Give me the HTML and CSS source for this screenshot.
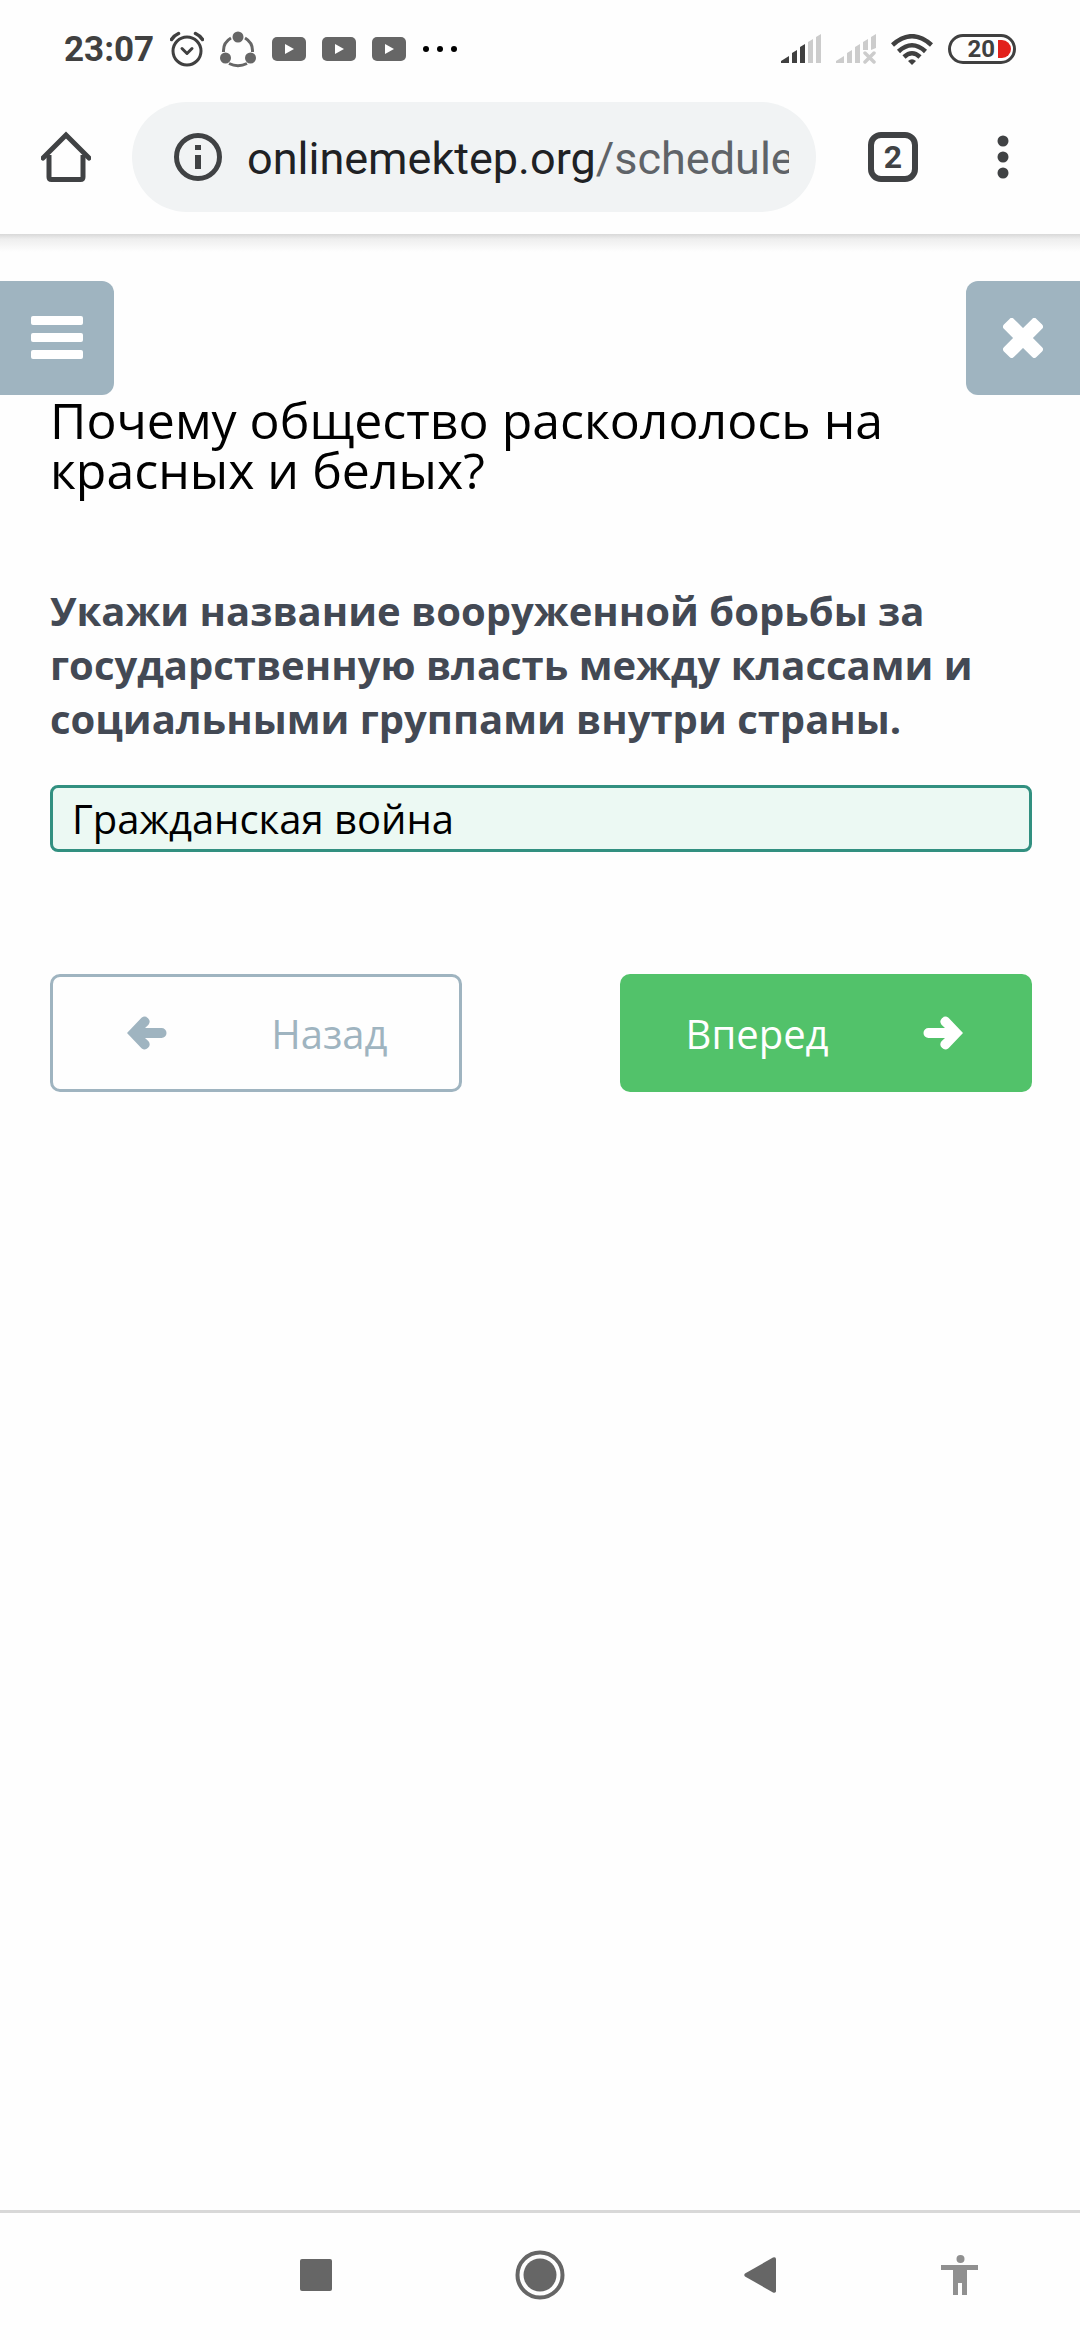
FILE: index.html
```html
<!DOCTYPE html>
<html lang="ru">
<head>
    <meta charset="UTF-8">
    <meta name="viewport" content="width=device-width, initial-scale=1.0">
    <title>Onlinemektep</title>
    <link rel="stylesheet" href="styles.css">
</head>
<body>
    <header class="status-bar">
        <div class="status-left">
            <span class="clock">23:07</span>
            <svg width="34" height="36" viewBox="0 0 34 36" fill="none" stroke="#404040" stroke-width="3" stroke-linecap="round">
                <circle cx="17" cy="20" r="14"/>
                <path d="M12 17.500l5 5 5-5" stroke-linejoin="round"/>
                <path d="M1.500 8.500Q4 4.500 8.500 2.500M32.500 8.500Q30 4.500 25.500 2.500" stroke-width="3.500"/>
            </svg>
            <svg width="36" height="38" viewBox="0 0 36 38" fill="none" stroke="#666" stroke-width="3">
                <path d="M3.500 22A15 15 0 0 1 11 8M25 8A15 15 0 0 1 32.500 22M27 33.500Q18 38 9 33.500"/>
                <g fill="#666" stroke="none">
                    <circle cx="18" cy="7" r="5.500"/>
                    <circle cx="5.500" cy="28" r="5.500"/>
                    <circle cx="30.500" cy="28" r="5.500"/>
                </g>
            </svg>
            <svg width="34" height="24" viewBox="0 0 34 24"><rect width="34" height="24" rx="5" fill="#666"/><path d="M13 7l9 5-9 5z" fill="#fff"/></svg>
            <svg width="34" height="24" viewBox="0 0 34 24"><rect width="34" height="24" rx="5" fill="#666"/><path d="M13 7l9 5-9 5z" fill="#fff"/></svg>
            <svg width="34" height="24" viewBox="0 0 34 24"><rect width="34" height="24" rx="5" fill="#666"/><path d="M13 7l9 5-9 5z" fill="#fff"/></svg>
            <svg width="36" height="8" viewBox="0 0 36 8"><circle cx="4" cy="4" r="3"/><circle cx="18" cy="4" r="3"/><circle cx="32" cy="4" r="3"/></svg>
        </div>
        <div class="status-right">
            <svg width="40" height="30" viewBox="0 0 40 30">
                <path d="M0 27l8-5v7H0zM11 19l5-3v13h-5zM19 13l5-3v19h-5z" fill="#404040"/>
                <path d="M27 8l5-3v24h-5zM35 3l5-3v29h-5z" fill="#ccc"/>
            </svg>
            <svg width="40" height="30" viewBox="0 0 40 30" fill="#ccc">
                <path d="M0 27l8-5v7H0zM11 19l5-3v13h-5zM19 13l5-3v19h-5zM27 8l5-3v11h-5zM35 3l5-3v14l-5 2z"/>
                <path d="M29 19l9 9M38 19l-9 9" stroke="#ccc" stroke-width="3.500" stroke-linecap="round"/>
            </svg>
            <svg width="42" height="31" viewBox="0 0 42 31" fill="none" stroke="#404040" stroke-width="4.500">
                <path d="M1.500 11Q21-6.500 40.500 11M7.500 17.500Q21 5 34.500 17.500M13 23Q21 15.500 29 23"/>
                <path d="M21 31l-4-4q4-3.500 8 0z" fill="#404040" stroke="none"/>
            </svg>
            <span class="battery">20<svg width="13" height="18" viewBox="0 0 13 18"><path d="M0 0h4a9 9 0 0 1 0 18H0z" fill="#e2211c"/></svg></span>
        </div>
    </header>

    <nav class="toolbar">
        <button class="icon-btn" aria-label="Home">
            <svg width="50" height="52" viewBox="0 0 50 52" fill="none" stroke="#404244" stroke-width="5">
                <path d="M2 27L25 4l23 23" stroke-linecap="round"/>
                <path d="M8 24v22q0 2.500 2.500 2.500h29q2.500 0 2.500-2.500V24"/>
            </svg>
        </button>
        <div class="address">
            <button class="icon-btn" aria-label="Site info">
                <svg width="50" height="50" viewBox="0 0 50 50">
                    <circle cx="25" cy="25" r="21.500" fill="none" stroke="#404244" stroke-width="5"/>
                    <path d="M22 13h6v5h-6zM22 23h6v14h-6z" fill="#404244"/>
                </svg>
            </button>
            <a class="url" href="#">onlinemektep.org<span class="path">/schedule</span></a>
        </div>
        <button class="tabs" aria-label="Tabs">2</button>
        <button class="icon-btn" aria-label="Menu">
            <svg width="50" height="50" viewBox="0 0 50 50" fill="#404244"><circle cx="25" cy="9" r="5.500"/><circle cx="25" cy="25" r="5.500"/><circle cx="25" cy="41" r="5.500"/></svg>
        </button>
    </nav>

    <main class="page">
        <div class="corner-buttons">
            <button class="corner corner-left" aria-label="Меню">
                <svg width="52" height="44" viewBox="0 0 52 44" fill="#fff"><rect width="52" height="9" rx="2"/><rect y="17" width="52" height="9" rx="2"/><rect y="34" width="52" height="9" rx="2"/></svg>
            </button>
            <button class="corner corner-right" aria-label="Закрыть">
                <svg width="40" height="40" viewBox="0 0 40 40" fill="#fff">
                    <rect x="-3" y="13" width="46" height="14" rx="3" transform="rotate(45 20 20)"/>
                    <rect x="-3" y="13" width="46" height="14" rx="3" transform="rotate(-45 20 20)"/>
                </svg>
            </button>
        </div>

        <form class="task">
            <h1>Почему общество раскололось на красных и белых?</h1>
            <label class="question" for="answer">Укажи название вооруженной борьбы за государственную власть между классами и социальными группами внутри страны.</label>
            <input class="answer" type="text" id="answer" value="Гражданская война">

            <div class="actions">
                <button type="button" class="btn btn-back">
                    <svg width="40" height="34" viewBox="0 0 40 34"><path d="M0 17L14.500 1.700a5 5 0 0 1 7 7L18 12h16.500a5 5 0 0 1 0 10H18l3.500 3.300a5 5 0 0 1-7 7z" fill="currentColor"/></svg>
                    <span>Назад</span>
                </button>
                <button type="button" class="btn btn-next">
                    <span>Вперед</span>
                    <svg width="40" height="34" viewBox="0 0 40 34"><path d="M40 17L25.500 1.700a5 5 0 0 0-7 7L22 12H5.500a5 5 0 0 0 0 10H22l-3.500 3.300a5 5 0 0 0 7 7z" fill="currentColor"/></svg>
                </button>
            </div>
        </form>
    </main>

    <footer class="nav-bar">
        <span></span>
        <button class="icon-btn" aria-label="Recent apps">
            <svg width="32" height="32" viewBox="0 0 32 32"><rect width="32" height="32" rx="2" fill="#666"/></svg>
        </button>
        <button class="icon-btn" aria-label="Home screen">
            <svg width="50" height="50" viewBox="0 0 50 50" fill="#666"><circle cx="25" cy="25" r="22.500" fill="none" stroke="#666" stroke-width="4"/><circle cx="25" cy="25" r="16.500"/></svg>
        </button>
        <button class="icon-btn back" aria-label="Back">
            <svg width="32" height="36" viewBox="0 0 32 36"><path d="M1 16.500L29 .5q2-1 3 1v33q-1 2-3 1L1 19.500q-1.500-1.500 0-3z" fill="#666"/></svg>
        </button>
        <button class="icon-btn access" aria-label="Accessibility">
            <svg width="38" height="42" viewBox="0 0 38 42" fill="#909090"><circle cx="19.500" cy="5" r="4"/><path d="M0 11h37v5H26v25h-5V29h-4v12h-5V16H0z"/></svg>
        </button>
    </footer>
</body>
</html>
```
FILE: styles.css
```css
/* Global reset */
* {
    margin: 0;
    padding: 0;
    box-sizing: border-box;
}

body {
    display: flex;
    flex-direction: column;
    min-height: 100vh;
    background: #fefefe;
    font-family: 'Open Sans', 'Noto Sans', sans-serif;
    color: #000;
}

button {
    border: none;
    background: none;
    font-family: inherit;
    cursor: pointer;
}

svg {
    display: block;
    flex-shrink: 0;
}

.icon-btn {
    display: flex;
    justify-content: center;
    align-items: center;
}

/* Phone status bar */
.status-bar {
    display: flex;
    justify-content: space-between;
    height: 102px;
    padding: 0 64px 4px;
    font-family: Roboto, sans-serif;
    color: #404040;
}

.status-left,
.status-right {
    display: flex;
    align-items: center;
    gap: 16px;
}

.status-right {
    gap: 15px;
}

.clock {
    font-size: 35px;
    font-weight: 700;
}

.battery {
    display: flex;
    align-items: center;
    justify-content: flex-end;
    gap: 3px;
    width: 68px;
    height: 30px;
    padding-right: 2px;
    border: 3px solid #404040;
    border-radius: 15px;
    font-size: 24px;
    font-weight: 700;
}

/* Browser toolbar */
.toolbar {
    display: flex;
    align-items: center;
    padding: 0 52px 22px 41px;
    font-family: Roboto, sans-serif;
}

.address {
    flex: 1;
    display: flex;
    align-items: center;
    gap: 24px;
    min-width: 0;
    height: 110px;
    margin: 0 52px 0 41px;
    padding: 0 27px 0 41px;
    border-radius: 55px;
    background: #f1f3f4;
}

.url {
    overflow: hidden;
    padding-top: 3px;
    white-space: nowrap;
    font-size: 45px;
    color: #202124;
    text-decoration: none;
}

.path {
    color: #5f6368;
}

.tabs {
    width: 50px;
    height: 50px;
    margin-right: 60px;
    border: 6px solid #404244;
    border-radius: 13px;
    font-size: 32px;
    font-weight: 700;
    line-height: 38px;
    color: #404244;
}

/* Page content */
.page {
    flex: 1;
    padding-top: 47px;
    background: linear-gradient(#d8d8d8, #eee 5px, #fefefe 18px);
}

.corner-buttons {
    display: flex;
    justify-content: space-between;
}

.corner {
    display: flex;
    justify-content: center;
    align-items: center;
    width: 114px;
    height: 114px;
    background: #9fb4c0;
}

.corner-left {
    border-radius: 0 12px 12px 0;
}

.corner-right {
    border-radius: 12px 0 0 12px;
}

.task {
    padding: 0 48px 0 50px;
}

h1 {
    font-size: 50px;
    font-weight: 400;
    line-height: 50px;
}

.question {
    display: block;
    margin: 89px 0 39px;
    font-size: 40px;
    font-weight: 700;
    line-height: 54px;
    color: #434954;
}

.answer {
    display: block;
    width: 100%;
    height: 67px;
    padding: 0 19px;
    border: 3px solid #329080;
    border-radius: 8px;
    outline: none;
    background: #ecf9f3;
    font-family: inherit;
    font-size: 40px;
    color: #000;
}

.actions {
    display: flex;
    justify-content: space-between;
    margin-top: 122px;
}

.btn {
    display: flex;
    justify-content: space-between;
    align-items: center;
    width: 42%;
    height: 118px;
    border-radius: 10px;
    font-size: 40px;
}

.btn-back {
    padding: 0 72px 0 74px;
    border: 3px solid #9fb4c0;
    color: #9fb4c0;
}

.btn-next {
    padding: 0 69px 0 66px;
    background: #52c26a;
    color: #fff;
}

/* Phone navigation bar */
.nav-bar {
    display: grid;
    grid-template-columns: 1fr 224px 224px 224px 1fr;
    height: 130px;
    padding-bottom: 4px;
    border-top: 3px solid #d8d8d8;
}

.back {
    padding-right: 8px;
}

.access {
    padding-right: 36px;
}
```
